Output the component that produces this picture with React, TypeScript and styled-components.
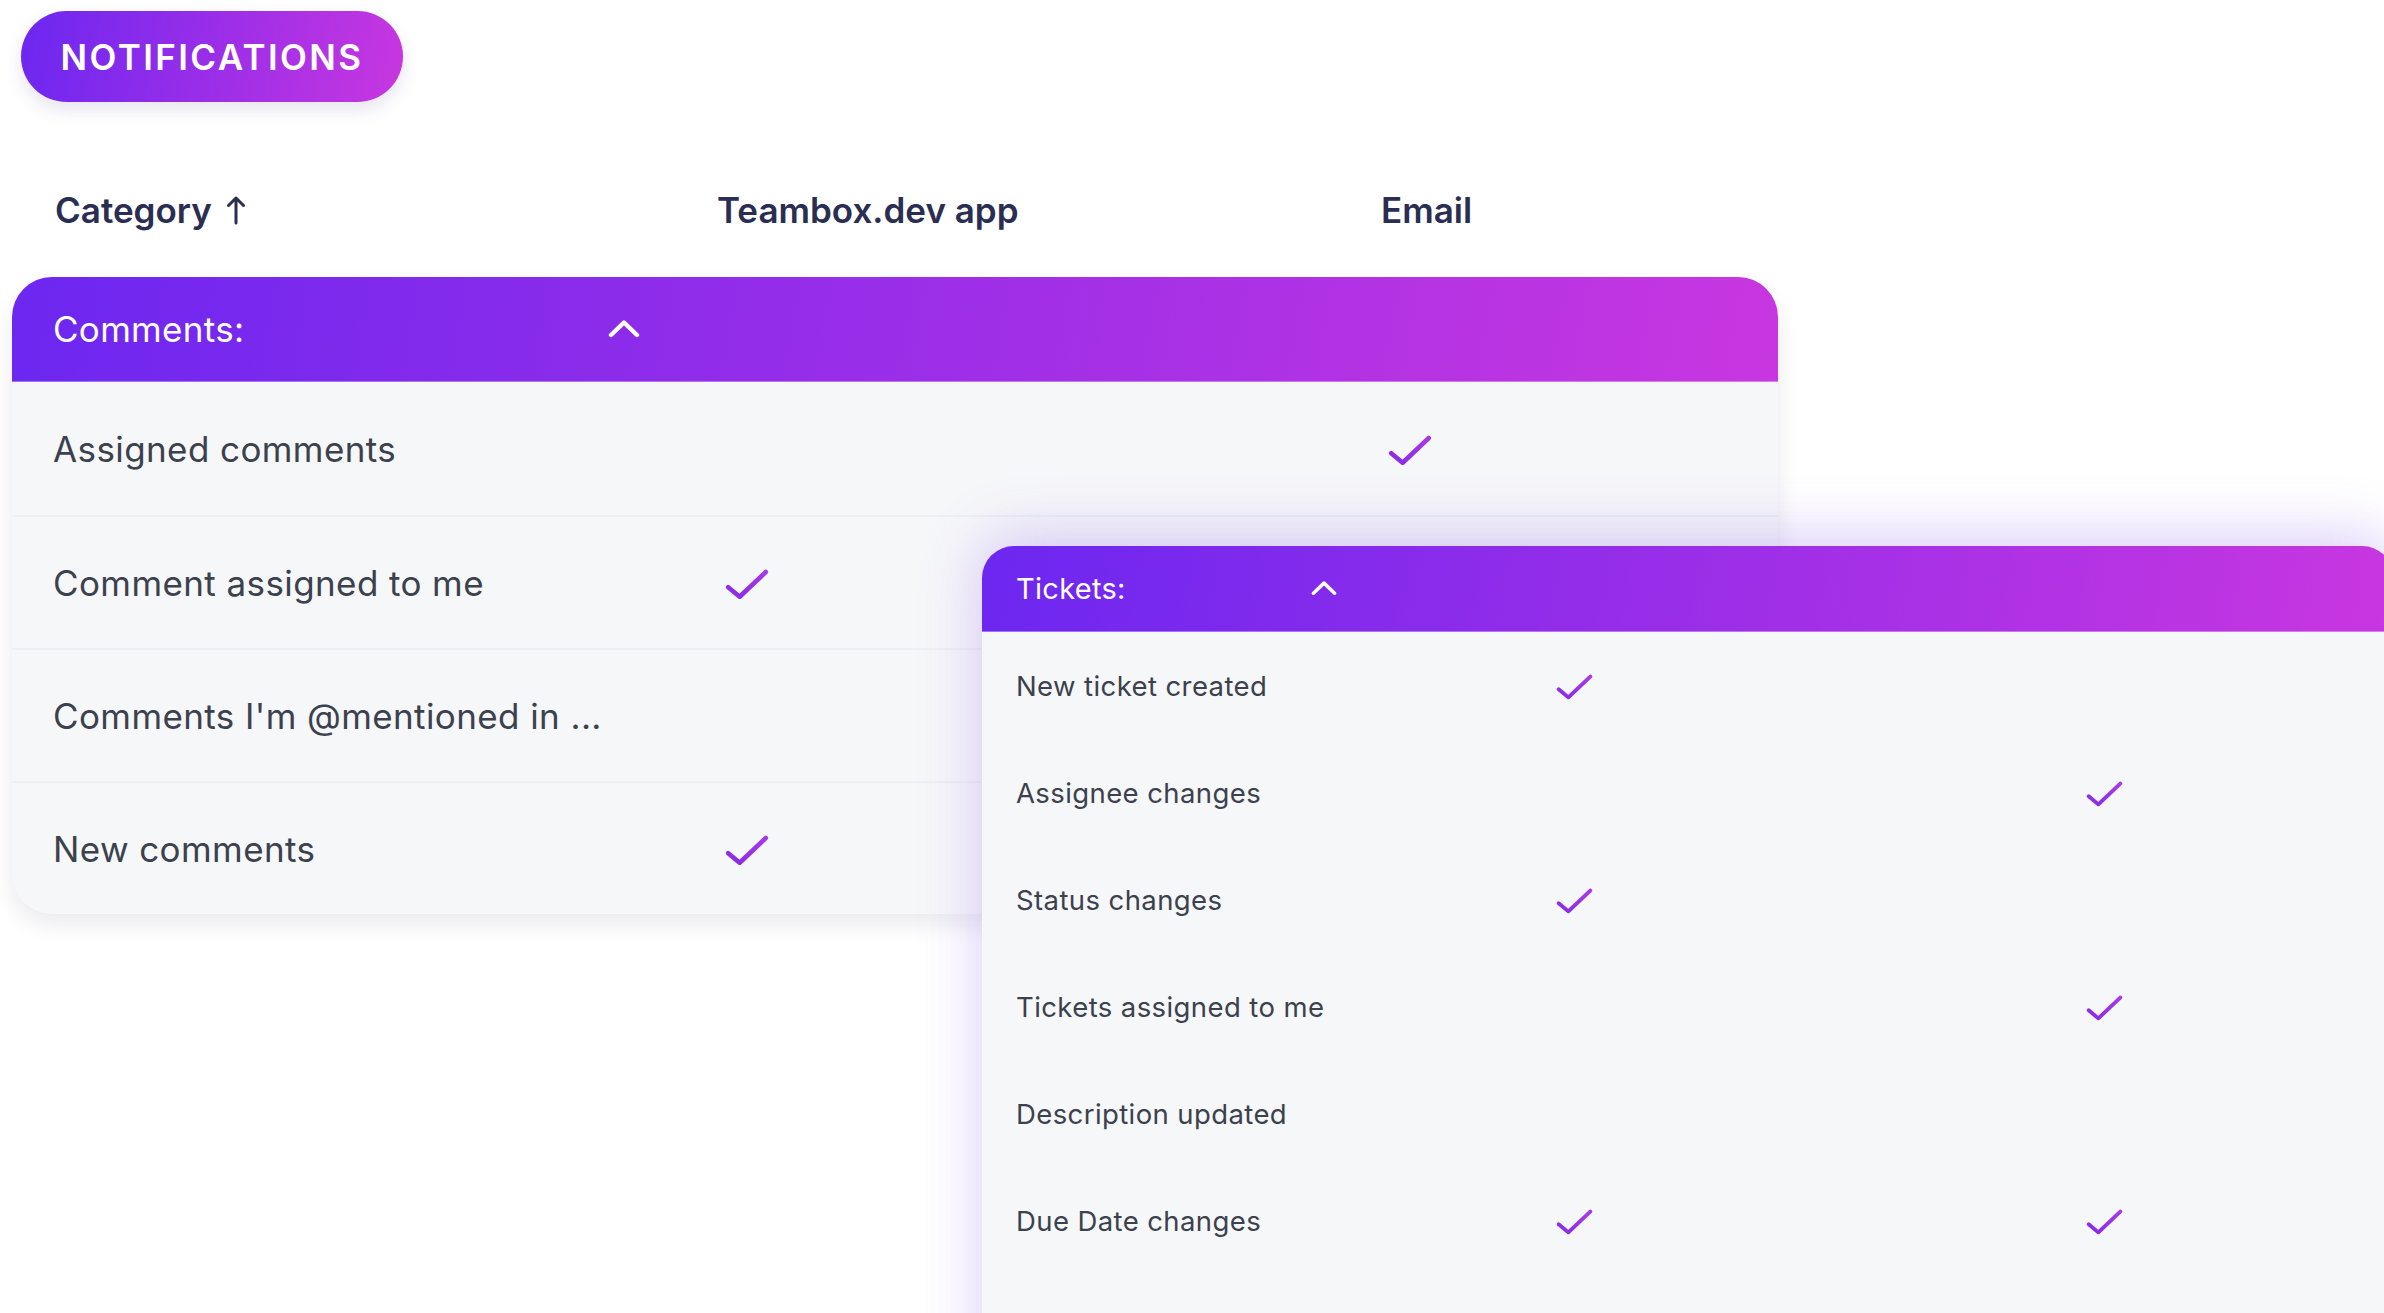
import styled, { createGlobalStyle } from 'styled-components';

const GlobalStyle = createGlobalStyle`
  html, body {
    margin: 0;
    padding: 0;
    background: #ffffff;
    overflow: hidden;
  }
  body {
    font-family: Inter, "Noto Sans", sans-serif;
    -webkit-font-smoothing: antialiased;
  }
`;

const brandGradient = 'linear-gradient(100deg, #6c27f0 0%, #9a2ee8 50%, #c837e0 100%)';

const Page = styled.div`
  position: relative;
  width: 2384px;
  height: 1313px;
  padding: 11px 0 0 12px;
  box-sizing: border-box;
  overflow: hidden;
`;

const Pill = styled.div`
  display: inline-flex;
  align-items: center;
  justify-content: center;
  margin-left: 9px;
  width: 382px;
  height: 91px;
  border-radius: 46px;
  background: ${brandGradient};
  box-shadow: 0 8px 18px rgba(60, 40, 120, 0.12);
  color: #fff;
  font-size: 35px;
  font-weight: 600;
  letter-spacing: 2.4px;
`;

const ColumnHeader = styled.div`
  display: grid;
  grid-template-columns: 662px 664px 1fr;
  align-items: center;
  width: 1766px;
  height: 175px;
  padding: 40px 0 0 43px;
  box-sizing: border-box;
  color: #2a2e52;
  font-size: 35px;
  font-weight: 600;
`;

const HeadLabel = styled.div`
  display: flex;
  align-items: center;
  gap: 14px;
`;

const Card = styled.div`
  width: 1766px;
  border-radius: 40px;
  background: #f6f7f9;
  box-shadow: 0 10px 22px rgba(20, 20, 50, 0.09);
  overflow: hidden;
`;

const GroupBar = styled.div<{ $height: number; $pad: number }>`
  display: flex;
  align-items: center;
  height: ${({ $height }) => $height}px;
  padding-left: ${({ $pad }) => $pad}px;
  background: ${brandGradient};
  border-bottom: 1px solid rgba(255, 255, 255, 0.35);
  box-sizing: border-box;
  color: #fff;
`;

const GroupTitle = styled.div<{ $width: number; $size: number }>`
  width: ${({ $width }) => $width}px;
  font-size: ${({ $size }) => $size}px;
  font-weight: 400;
  letter-spacing: 0.3px;
`;

const Row = styled.div<{ $height: number; $pad: number; $cols: string; $lined?: boolean }>`
  display: grid;
  grid-template-columns: ${({ $cols }) => $cols};
  align-items: center;
  height: ${({ $height }) => $height}px;
  padding-left: ${({ $pad }) => $pad}px;
  box-sizing: border-box;
  border-top: ${({ $lined }) => ($lined ? '2px solid #eeeff3' : 'none')};
`;

const RowLabel = styled.div<{ $size: number }>`
  font-size: ${({ $size }) => $size}px;
  letter-spacing: 0.4px;
  color: #3c414e;
  white-space: nowrap;
`;

const CheckCell = styled.div<{ $offset: number }>`
  display: flex;
  align-items: center;
  padding-left: ${({ $offset }) => $offset}px;
  padding-top: 3px;
`;

const TicketsPanel = styled.div`
  position: absolute;
  left: 982px;
  top: 546px;
  width: 1412px;
  height: 900px;
  border-radius: 32px;
  background: #f6f7f9;
  box-shadow: 0 -8px 60px rgba(130, 80, 235, 0.3);
  overflow: hidden;
`;

const Check = ({ w }: { w: number }) => (
  <svg width={w} height={w * 0.7} viewBox="0 0 48 33" fill="none">
    <defs>
      <linearGradient id="chk" x1="0" y1="1" x2="1" y2="0">
        <stop offset="0" stopColor="#8a2be6" />
        <stop offset="1" stopColor="#a63ae8" />
      </linearGradient>
    </defs>
    <path d="M3.5 19.5 L16 30 L44.5 3" stroke="url(#chk)" strokeWidth="5" strokeLinecap="round" strokeLinejoin="round" />
  </svg>
);

const Chevron = ({ w }: { w: number }) => (
  <svg width={w} height={w * 0.55} viewBox="0 0 32 17.6" fill="none">
    <path d="M3 15 L16 2.5 L29 15" stroke="#fff" strokeWidth="4.4" strokeLinecap="round" strokeLinejoin="round" />
  </svg>
);

const ArrowUp = () => (
  <svg width="20" height="30" viewBox="0 0 20 30" fill="none">
    <path d="M10 3 V28 M2.5 10.5 L10 3 L17.5 10.5" stroke="#2a2e52" strokeWidth="3" strokeLinecap="round" strokeLinejoin="round" />
  </svg>
);

type Item = { label: string; app: boolean; email: boolean };

const comments: Item[] = [
  { label: 'Assigned comments', app: false, email: true },
  { label: 'Comment assigned to me', app: true, email: false },
  { label: "Comments I'm @mentioned in ...", app: false, email: false },
  { label: 'New comments', app: true, email: false },
];

const tickets: Item[] = [
  { label: 'New ticket created', app: true, email: false },
  { label: 'Assignee changes', app: false, email: true },
  { label: 'Status changes', app: true, email: false },
  { label: 'Tickets assigned to me', app: false, email: true },
  { label: 'Description updated', app: false, email: false },
  { label: 'Due Date changes', app: true, email: true },
];

const App = () => {
  return (
    <Page>
      <GlobalStyle />
      <Pill>NOTIFICATIONS</Pill>

      <ColumnHeader>
        <HeadLabel>
          Category <ArrowUp />
        </HeadLabel>
        <HeadLabel>Teambox.dev app</HeadLabel>
        <HeadLabel>Email</HeadLabel>
      </ColumnHeader>

      <Card>
        <GroupBar $height={105} $pad={41}>
          <GroupTitle $width={555} $size={35}>Comments:</GroupTitle>
          <Chevron w={32} />
        </GroupBar>
        {comments.map((c, i) => (
          <Row key={c.label} $height={133} $pad={41} $cols="662px 664px 1fr" $lined={i > 0}>
            <RowLabel $size={35}>{c.label}</RowLabel>
            <CheckCell $offset={10}>{c.app && <Check w={44} />}</CheckCell>
            <CheckCell $offset={9}>{c.email && <Check w={44} />}</CheckCell>
          </Row>
        ))}
      </Card>

      <TicketsPanel>
        <GroupBar $height={86} $pad={34}>
          <GroupTitle $width={295} $size={29}>Tickets:</GroupTitle>
          <Chevron w={26} />
        </GroupBar>
        {tickets.map((t) => (
          <Row key={t.label} $height={107} $pad={34} $cols="540px 530px 1fr">
            <RowLabel $size={27.5}>{t.label}</RowLabel>
            <CheckCell $offset={0}>{t.app && <Check w={37} />}</CheckCell>
            <CheckCell $offset={0}>{t.email && <Check w={37} />}</CheckCell>
          </Row>
        ))}
      </TicketsPanel>
    </Page>
  );
};

export default App;
